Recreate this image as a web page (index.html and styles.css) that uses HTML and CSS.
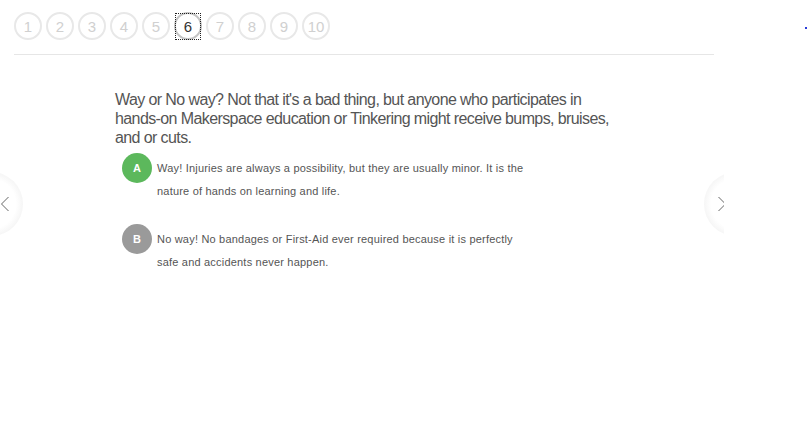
FILE: index.html
```
<!DOCTYPE html>
<html>
<head>
<meta charset="utf-8">
<link rel="stylesheet" href="styles.css">
</head>
<body>
<div class="stage">
  <div class="quiz">
    <ol class="steps">
      <li class="step">1</li>
      <li class="step">2</li>
      <li class="step">3</li>
      <li class="step">4</li>
      <li class="step">5</li>
      <li class="step current">6</li>
      <li class="step">7</li>
      <li class="step">8</li>
      <li class="step">9</li>
      <li class="step">10</li>
    </ol>
    <div class="question">
      <p class="prompt">Way or No way? Not that it's a bad thing, but anyone who participates in <span class="nowrap">hands-on</span> Makerspace education or Tinkering might receive bumps, bruises, and or cuts.</p>
      <div class="option">
        <span class="badge badge-a">A</span>
        <span class="answer">Way! Injuries are always a possibility, but they are usually minor. It is the nature of hands on learning and life.</span>
      </div>
      <div class="option">
        <span class="badge badge-b">B</span>
        <span class="answer">No way! No bandages or First-Aid ever required because it is perfectly safe and accidents never happen.</span>
      </div>
    </div>
  </div>
  <button class="arrow arrow-prev" aria-label="Previous">
    <svg width="10" height="16" viewBox="0 0 10 16"><polyline points="8.5,1 1.5,8 8.5,15" fill="none" stroke="#666" stroke-width="1"/></svg>
  </button>
  <button class="arrow arrow-next" aria-label="Next">
    <svg width="10" height="16" viewBox="0 0 10 16"><polyline points="1.5,1 8.5,8 1.5,15" fill="none" stroke="#666" stroke-width="1"/></svg>
  </button>
</div>
<span class="dot"></span>
</body>
</html>
```
FILE: styles.css
```
html, body {
  margin: 0;
  padding: 0;
  background: #fff;
  font-family: "Liberation Sans", Arial, sans-serif;
  color: #555;
}
.stage {
  position: relative;
  width: 724px;
  height: 423px;
  overflow: hidden;
}
.quiz {
  padding: 12px 10px 0 14px;
}
.steps {
  list-style: none;
  margin: 0;
  padding: 0 0 14px;
  display: flex;
  gap: 4px;
  border-bottom: 1px solid #e6e6e6;
}
.step {
  position: relative;
  box-sizing: border-box;
  width: 28px;
  height: 28px;
  border: 2px solid #e8e8e8;
  border-radius: 50%;
  display: flex;
  align-items: center;
  justify-content: center;
  font-size: 15px;
  color: #d0d0d0;
}
.step.current {
  border-color: #c4c4c4;
  color: #333;
}
.step.current::after {
  content: "";
  position: absolute;
  left: -1px;
  top: -1px;
  right: -1px;
  bottom: -2px;
  border: 1px dotted #222;
}
.question {
  margin: 35px 0 0 101px;
}
.prompt {
  width: 505px;
  margin: 0;
  font-size: 16px;
  line-height: 19px;
  letter-spacing: -0.6px;
  color: #555;
}
.nowrap {
  white-space: nowrap;
}
.option {
  display: flex;
  align-items: flex-start;
  margin: 6px 0 21px 7px;
}
.option + .option {
  margin-top: 0;
}
.badge {
  flex: none;
  width: 30px;
  height: 30px;
  border-radius: 50%;
  display: flex;
  align-items: center;
  justify-content: center;
  font-size: 11px;
  font-weight: bold;
  color: #fff;
}
.badge-a { background: #5cb85c; }
.badge-b { background: #9a9a9a; }
.answer {
  width: 372px;
  margin-left: 5px;
  padding-top: 4px;
  font-size: 11px;
  line-height: 23px;
  letter-spacing: 0.2px;
  color: #555;
}
.arrow {
  position: absolute;
  top: 172px;
  width: 64px;
  height: 64px;
  padding: 0;
  border: none;
  border-radius: 50%;
  background: radial-gradient(circle, #fff 55%, #f0f0f0 80%, #dadada 100%);
  display: flex;
  align-items: center;
  cursor: pointer;
}
.arrow-prev {
  left: -41px;
  justify-content: flex-end;
  padding-right: 13px;
  box-sizing: border-box;
}
.arrow-next {
  left: 704px;
  justify-content: flex-start;
  padding-left: 13px;
  box-sizing: border-box;
}
.dot {
  position: absolute;
  left: 805px;
  top: 27px;
  width: 2px;
  height: 2px;
  background: #2a3bd8;
}
```
